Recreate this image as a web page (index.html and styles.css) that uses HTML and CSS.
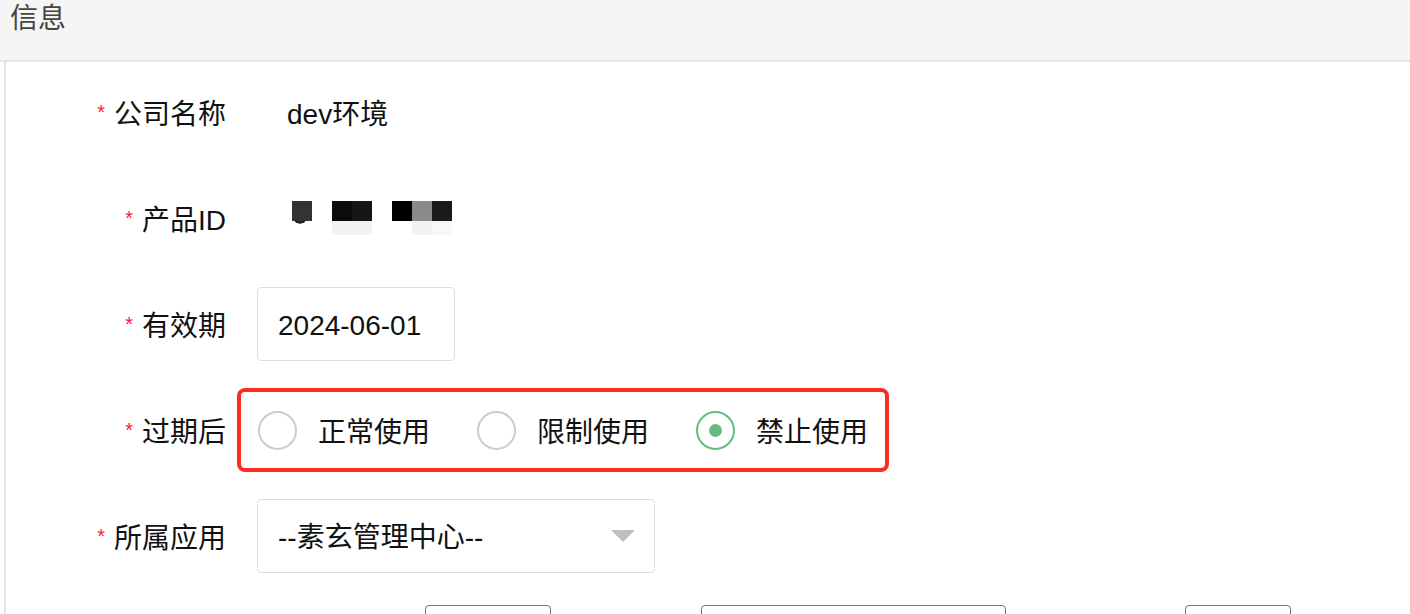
FILE: index.html
```html
<!DOCTYPE html>
<html lang="zh">
<head>
    <meta charset="UTF-8">
    <meta name="viewport" content="width=device-width, initial-scale=1.0">
    <title>信息</title>
    <link rel="stylesheet" href="styles.css">
</head>
<body>

<div class="panel-head">信息</div>

<div class="panel-body">
    <form class="form">
        <div class="form-row">
            <label class="form-label"><span class="req">*</span>公司名称</label>
            <div class="form-field">
                <span class="form-static">dev环境</span>
            </div>
        </div>

        <div class="form-row">
            <label class="form-label"><span class="req">*</span>产品ID</label>
            <div class="form-field">
                <!-- 打码的产品ID -->
                <div class="mosaic">
                    <i class="m1"></i><i></i><i class="m2"></i><i class="m3"></i><i></i><i class="m4"></i><i class="m5"></i><i class="m6"></i>
                    <i class="m7"></i><i></i><i class="m8"></i><i class="m8"></i><i></i><i></i><i class="m8"></i><i class="m9"></i>
                </div>
            </div>
        </div>

        <div class="form-row">
            <label class="form-label" for="expire"><span class="req">*</span>有效期</label>
            <div class="form-field">
                <input class="input input-date" type="text" id="expire" value="2024-06-01">
            </div>
        </div>

        <div class="form-row">
            <label class="form-label"><span class="req">*</span>过期后</label>
            <div class="form-field">
                <div class="radio-group">
                    <label class="radio"><span class="radio-dot"></span><span class="radio-text">正常使用</span></label>
                    <label class="radio"><span class="radio-dot"></span><span class="radio-text">限制使用</span></label>
                    <label class="radio checked"><span class="radio-dot"></span><span class="radio-text">禁止使用</span></label>
                </div>
            </div>
        </div>

        <div class="form-row">
            <label class="form-label"><span class="req">*</span>所属应用</label>
            <div class="form-field">
                <div class="select">
                    <span class="select-text">--素玄管理中心--</span>
                    <span class="caret"></span>
                </div>
            </div>
        </div>

        <div class="form-row form-row-top">
            <label class="form-label"></label>
            <div class="form-field">
                <span class="inline-text t1">最大用户数</span>
                <span class="input box-a"></span>
                <span class="inline-text t2">个，最大设备</span>
                <span class="input box-b"></span>
                <span class="inline-text t3">台，存储空间</span>
                <span class="input box-c"></span>
                <span class="inline-text t4">GB，并发</span>
            </div>
        </div>
    </form>
</div>

</body>
</html>
```

FILE: styles.css
```css
body { margin: 0; font-family: "Liberation Sans", "Noto Sans CJK SC", sans-serif; color: #111; background: #fff; overflow: hidden; }

.panel-head { height: 58px; padding: 2px 10px 0; background: #f5f5f5; border-bottom: 2px solid #e6e6e6; font-size: 28px; line-height: 34px; color: #444; }

.panel-body { margin-left: 4px; border-left: 2px solid #e3e3e3; padding-top: 13px; height: 600px; }

.form-row { display: flex; align-items: center; height: 74px; margin-bottom: 32px; }
.form-row-top { align-items: flex-start; }
.form-label { flex-shrink: 0; width: 220px; padding-top: 5px; box-sizing: border-box; display: flex; justify-content: flex-end; align-items: center; font-size: 28px; line-height: 34px; color: #111; }
.req { color: #f5222d; font-size: 20px; line-height: 20px; margin-right: 9px; position: relative; top: -3px; }
.form-field { flex-shrink: 0; margin-left: 31px; display: flex; align-items: center; }
.form-row-top .form-field { align-items: flex-start; }

.form-static { padding: 5px 0 0 30px; font-size: 28px; line-height: 34px; }

.mosaic { margin-left: 35px; display: grid; grid-template-columns: repeat(8, 20px); grid-template-rows: 20px 14px; }
.mosaic i { display: block; }
.m1 { background: #333; }
.m2 { background: #0b0b0b; }
.m3 { background: #161616; }
.m4 { background: #000; }
.m5 { background: #8a8a8a; }
.m6 { background: #1b1b1b; }
.m7 { background: radial-gradient(ellipse 8px 4px at 8px 0, #222 60%, transparent 70%); }
.m8 { background: #f2f2f2; }
.m9 { background: #f8f8f8; }

.input { flex-shrink: 0; box-sizing: border-box; height: 74px; border: 1px solid #ddd; border-radius: 4px; background: #fff; font-family: inherit; font-size: 28px; color: #111; }
.input-date { width: 198px; padding: 4px 20px 0; outline: none; }

.radio-group { margin-left: -20px; height: 84px; box-sizing: border-box; border: 4px solid #fa2b20; border-radius: 8px; padding: 0 17px; display: flex; align-items: center; gap: 47px; }
.radio { display: flex; align-items: center; gap: 21px; font-size: 28px; line-height: 34px; color: #111; }
.radio-text { padding-top: 5px; }
.radio-dot { box-sizing: border-box; width: 39px; height: 39px; border: 2px solid #ccc; border-radius: 50%; display: flex; align-items: center; justify-content: center; }
.radio.checked .radio-dot { border-color: #64bd7f; }
.radio.checked .radio-dot::after { content: ""; width: 13px; height: 13px; border-radius: 50%; background: #64bd7f; }

.select { box-sizing: border-box; width: 398px; height: 74px; border: 1px solid #ddd; border-radius: 4px; padding: 0 19px 0 20px; display: flex; align-items: center; justify-content: space-between; font-size: 28px; line-height: 34px; }
.select-text { padding-top: 4px; }
.caret { width: 0; height: 0; border-left: 12px solid transparent; border-right: 12px solid transparent; border-top: 12px solid #bfbfbf; }

.inline-text { flex-shrink: 0; font-size: 28px; line-height: 34px; padding-top: 9px; color: #333; white-space: nowrap; }
.t1 { margin-left: 5px; width: 163px; }
.t2 { margin-left: 5px; width: 145px; }
.t3 { margin-left: 10px; width: 169px; }
.t4 { margin-left: 9px; }
.form-row-top .input { border-color: #767676; }
.box-a { width: 126px; }
.box-b { width: 305px; }
.box-c { width: 106px; }
```
